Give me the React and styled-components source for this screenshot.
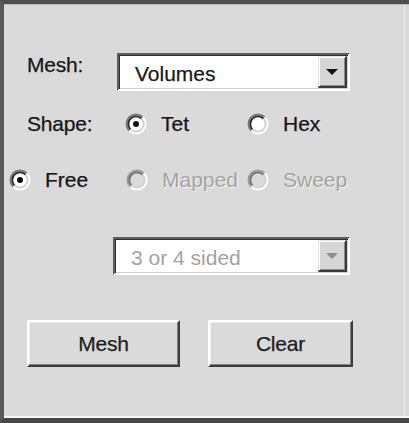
import React from "react";
import styled, { createGlobalStyle } from "styled-components";

const Global = createGlobalStyle`
  html, body { margin: 0; padding: 0; background: #dadada; }
  body { font-family: "Liberation Sans", Arial, sans-serif; }
  * { box-sizing: border-box; }
`;

const Window = styled.div`
  width: 409px;
  height: 423px;
  background: #dadada;
  border-top: 4px solid #4e4e4e;
  border-left: 4px solid #5a5a5a;
  border-bottom: 5px solid #474747;
  box-shadow: inset 0 -2px 0 #f6f6f6, inset 0 1px 0 #bdbdbd,
    inset -4px 0 0 #dadada, inset -5px 0 0 #eeeeee;
  display: flex;
  flex-direction: column;
  padding-top: 49px;
  font-family: "Liberation Sans", Arial, sans-serif;
  font-size: 21px;
  line-height: 24px;
  color: #161616;
  -webkit-text-stroke: 0.25px currentColor;
`;

const Row = styled.div`
  display: flex;
  align-items: ${(p) => (p.$center ? "center" : "flex-start")};
  margin-top: ${(p) => p.$top || 0}px;
  padding-left: ${(p) => p.$indent || 0}px;
  gap: ${(p) => p.$gap || 0}px;
`;

const Label = styled.span`
  width: ${(p) => p.$width}px;
  flex-shrink: 0;
  letter-spacing: -0.2px;
`;

const ComboBox = styled.div`
  width: ${(p) => p.$width}px;
  height: 38px;
  display: flex;
  align-items: stretch;
  background: #ffffff;
  border: 2px solid;
  border-color: #5e5e5e #ffffff #ffffff #5e5e5e;
  box-shadow: inset 1px 1px 0 #2e2e2e, inset -1px -1px 0 #d0d0d0;
  padding: 1px;
`;

const ComboText = styled.span`
  flex: 1;
  padding: 6px 0 0 15px;
  color: ${(p) => (p.$disabled ? "#a2a2a2" : "#1a1a1a")};
  -webkit-text-stroke: ${(p) => (p.$disabled ? "0px" : "0.25px")} currentColor;
`;

const DropButton = styled.span`
  width: 29px;
  display: flex;
  align-items: center;
  justify-content: center;
  background: #d6d6d6;
  border-top: 1px solid #e4e4e4;
  border-left: 1px solid #e4e4e4;
  border-right: 2px solid #3a3a3a;
  border-bottom: 2px solid #3a3a3a;
  box-shadow: inset 1px 1px 0 #ffffff, inset -1px -1px 0 #8a8a8a;
`;

const Arrow = styled.span`
  width: 0;
  height: 0;
  border-left: 6px solid transparent;
  border-right: 6px solid transparent;
  border-top: 6px solid ${(p) => (p.$disabled ? "#8c8c8c" : "#111111")};
  margin-top: 1px;
`;

const RadioItem = styled.label`
  display: flex;
  align-items: center;
  gap: 14px;
  width: ${(p) => (p.$width ? `${p.$width}px` : "auto")};
  flex-shrink: 0;
  height: 24px;
  color: ${(p) => (p.$disabled ? "#a3a3a3" : "#161616")};
  text-shadow: ${(p) => (p.$disabled ? "1px 1px 0 #f4f4f4" : "none")};
  -webkit-text-stroke: ${(p) => (p.$disabled ? "0px" : "0.25px")} currentColor;
`;

const ButtonRow = styled.div`
  display: flex;
  gap: 28px;
  margin-top: 45px;
  padding-left: 23px;
`;

const PushButton = styled.button`
  width: ${(p) => p.$width}px;
  height: 47px;
  font: inherit;
  color: #1e1e1e;
  -webkit-text-stroke: 0.25px currentColor;
  background: #dadada;
  border: 2px solid;
  border-color: #ffffff #3c3c3c #3c3c3c #ffffff;
  box-shadow: inset -1px -1px 0 #858585, inset 1px 1px 0 #eeeeee;
  padding: 0;
  letter-spacing: -0.2px;
`;

function arc(cx, cy, r, first) {
  const d = r * Math.SQRT1_2;
  return first
    ? `M ${cx - d} ${cy + d} A ${r} ${r} 0 0 1 ${cx + d} ${cy - d}`
    : `M ${cx + d} ${cy - d} A ${r} ${r} 0 0 1 ${cx - d} ${cy + d}`;
}

function RadioMark({ checked, disabled }) {
  const c = 11;
  return (
    <svg width="22" height="22" viewBox="0 0 22 22" style={{ flexShrink: 0 }}>
      <circle cx={c} cy={c} r="7" fill={disabled ? "#dadada" : "#ffffff"} />
      <path d={arc(c, c, 9.5, true)} stroke={disabled ? "#9a9a9a" : "#7a7a7a"} strokeWidth="2" fill="none" />
      <path d={arc(c, c, 9.5, false)} stroke="#ffffff" strokeWidth="2" fill="none" />
      <path d={arc(c, c, 7.7, true)} stroke={disabled ? "#6e6e6e" : "#2a2a2a"} strokeWidth="1.8" fill="none" />
      <path d={arc(c, c, 7.7, false)} stroke="#d2d2d2" strokeWidth="1.8" fill="none" />
      {checked && <circle cx={c} cy={c} r="3" fill="#0c0c0c" />}
    </svg>
  );
}

function Radio({ label, checked, disabled, width }) {
  return (
    <RadioItem $width={width} $disabled={disabled}>
      <RadioMark checked={checked} disabled={disabled} />
      <span>{label}</span>
    </RadioItem>
  );
}

function Combo({ value, width, disabled }) {
  return (
    <ComboBox $width={width}>
      <ComboText $disabled={disabled}>{value}</ComboText>
      <DropButton>
        <Arrow $disabled={disabled} />
      </DropButton>
    </ComboBox>
  );
}

export default function App() {
  return (
    <>
      <Global />
      <Window>
        <Row $indent={23}>
          <Label $width={90}>Mesh:</Label>
          <Combo value="Volumes" width={233} />
        </Row>
        <Row $indent={23} $top={21}>
          <Label $width={98}>Shape:</Label>
          <Radio label="Tet" checked width={122} />
          <Radio label="Hex" />
        </Row>
        <Row $indent={5} $top={32}>
          <Radio label="Free" checked width={117} />
          <Radio label="Mapped" disabled width={121} />
          <Radio label="Sweep" disabled />
        </Row>
        <Row $indent={109} $top={45}>
          <Combo value="3 or 4 sided" width={237} disabled />
        </Row>
        <ButtonRow>
          <PushButton $width={153}>Mesh</PushButton>
          <PushButton $width={145}>Clear</PushButton>
        </ButtonRow>
      </Window>
    </>
  );
}
